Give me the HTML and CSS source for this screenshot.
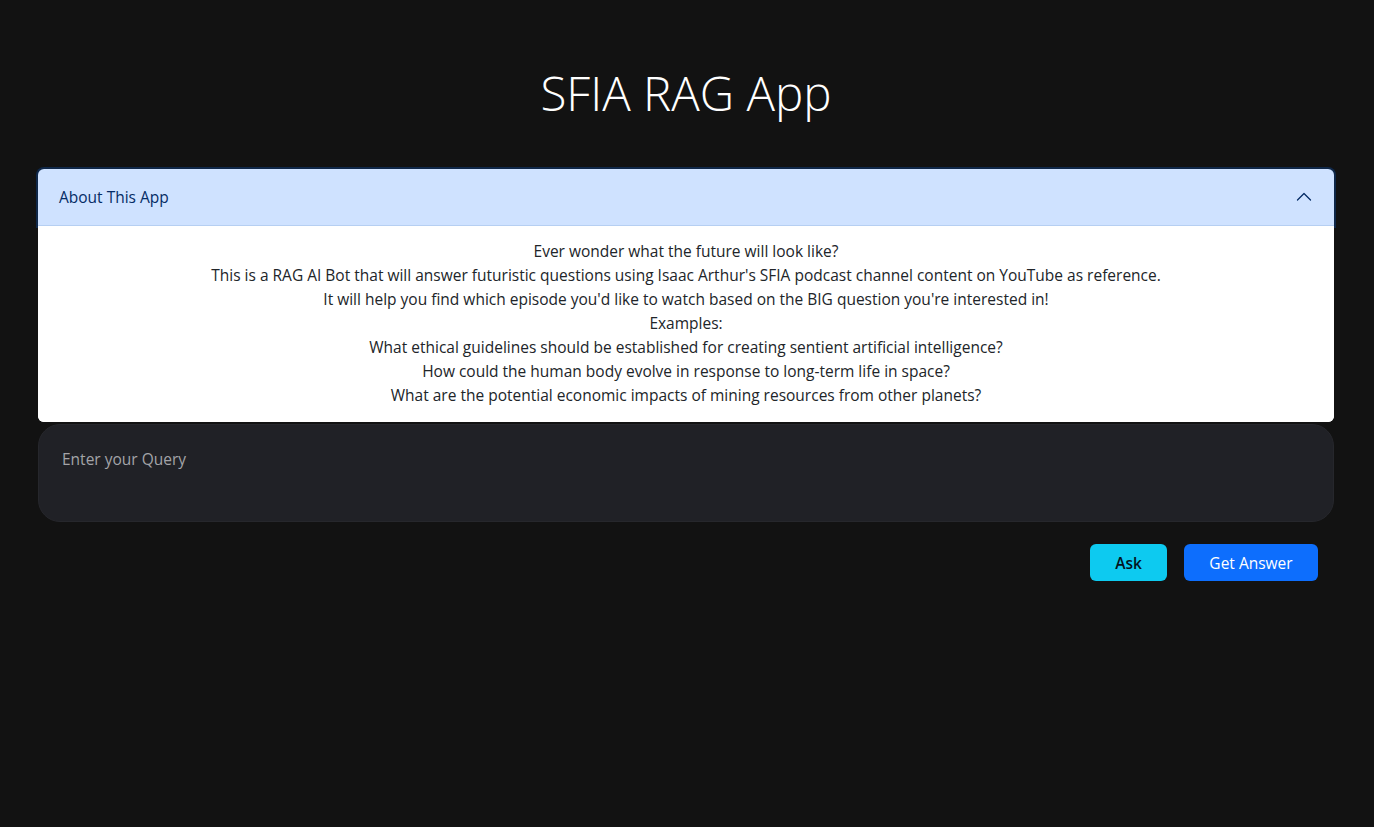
FILE: index.html
```html
<!DOCTYPE html>
<html lang="en">
<head>
<meta charset="utf-8">
<title>SFIA RAG App</title>
<link rel="stylesheet" href="styles.css">
</head>
<body>
<main class="app">
  <h1 class="title">SFIA RAG App</h1>
  <section class="accordion">
    <button class="acc-header" type="button">
      <span>About This App</span>
      <svg class="chevron" width="16" height="16" viewBox="0 0 16 16" fill="none" stroke="#052c65" stroke-width="1.3" stroke-linecap="round" stroke-linejoin="round"><path d="M1.5 11 L8 4.5 L14.5 11"/></svg>
    </button>
    <div class="acc-body">
      <p>Ever wonder what the future will look like?</p>
      <p>This is a RAG AI Bot that will answer futuristic questions using Isaac Arthur's SFIA podcast channel content on YouTube as reference.</p>
      <p>It will help you find which episode you'd like to watch based on the BIG question you're interested in!</p>
      <p>Examples:</p>
      <p>What ethical guidelines should be established for creating sentient artificial intelligence?</p>
      <p>How could the human body evolve in response to long-term life in space?</p>
      <p>What are the potential economic impacts of mining resources from other planets?</p>
    </div>
  </section>
  <textarea class="query" placeholder="Enter your Query"></textarea>
  <div class="actions">
    <button class="btn btn-info" type="button">Ask</button>
    <button class="btn btn-primary" type="button">Get Answer</button>
  </div>
</main>
</body>
</html>
```
FILE: styles.css
```css
* { box-sizing: border-box; }
html, body { margin: 0; padding: 0; }
body {
  background: #121212;
  font-family: "Open Sans", "Noto Sans", sans-serif;
  color: #dee2e6;
  font-size: 15.5px;
}
.app {
  padding: 0 40px 0 38px;
  display: flex;
  flex-direction: column;
}
.title {
  margin: 64px 0 47px;
  text-align: center;
  font-weight: 300;
  font-size: 47.5px;
  line-height: 58px;
  color: #ffffff;
}
.accordion {
  border-radius: 6px;
  background: #ffffff;
}
.acc-header {
  display: flex;
  align-items: center;
  justify-content: space-between;
  width: 100%;
  height: 57px;
  padding: 0 22px 0 21px;
  background: #cfe2ff;
  border: 0;
  border-bottom: 1px solid #b6cff2;
  border-radius: 6px 6px 0 0;
  box-shadow: 0 0 0 2px #0f2748;
  color: #052c65;
  font-family: inherit;
  font-size: 15.5px;
  text-align: left;
  cursor: pointer;
}
.chevron { display: block; }
.acc-body {
  position: relative;
  background: #ffffff;
  border-radius: 0 0 6px 6px;
  padding: 13px 20px 15px;
  text-align: center;
  color: #212529;
}
.acc-body p {
  margin: 0;
  line-height: 24px;
}
.query {
  margin-top: 2px;
  height: 98px;
  resize: none;
  background: #202126;
  border: 1px solid #26272c;
  border-radius: 22px;
  padding: 23px 23px;
  color: #e0e0e0;
  font-family: inherit;
  font-size: 15.5px;
  outline: none;
}
.query::placeholder { color: #a3a4a8; }
.actions {
  display: flex;
  justify-content: flex-end;
  gap: 17px;
  margin-top: 22px;
  padding-right: 16px;
}
.btn {
  height: 37px;
  border: 0;
  border-radius: 6px;
  font-family: inherit;
  font-size: 15.5px;
  font-weight: 600;
  cursor: pointer;
  padding: 0;
}
.btn-info { background: #0dcaf0; color: #03141e; width: 77px; margin-left: 1px; }
.btn-primary { background: #0d6efd; color: #ffffff; width: 134px; font-weight: 500; }
```
